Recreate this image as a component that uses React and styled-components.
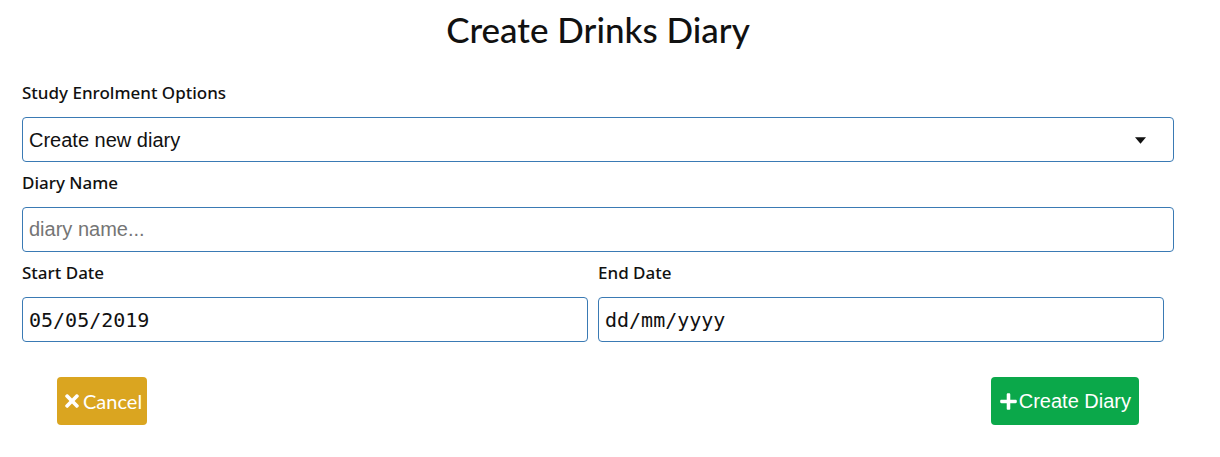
import React from "react";
import styled, { createGlobalStyle } from "styled-components";
import { FaTimes, FaPlus } from "react-icons/fa";

const GlobalStyle = createGlobalStyle`
  body {
    margin: 0;
    background: #ffffff;
    font-family: "Lato", "Noto Sans", sans-serif;
    color: #111;
  }
`;

export default function App() {
  return (
    <>
      <GlobalStyle />
      <Page>
        <Title>Create Drinks Diary</Title>
        <Form>
          <Field>
            <Label>Study Enrolment Options</Label>
            <SelectWrap>
              <Select defaultValue="new">
                <option value="new">Create new diary</option>
              </Select>
              <Caret viewBox="0 0 10 6">
                <path d="M0 0h10L5 6z" fill="#111" />
              </Caret>
            </SelectWrap>
          </Field>
          <Field>
            <Label>Diary Name</Label>
            <TextInput placeholder="diary name..." />
          </Field>
          <DateRow>
            <Field>
              <Label>Start Date</Label>
              <DateInput defaultValue="05/05/2019" />
            </Field>
            <Field>
              <Label>End Date</Label>
              <DateInput placeholder="dd/mm/yyyy" />
            </Field>
          </DateRow>
          <Actions>
            <Button $bg="#daa520" $font='"Lato", sans-serif' $pad="5px">
              <FaTimes size={20} />
              Cancel
            </Button>
            <Button $bg="#0ba84a" $font='"Liberation Sans", Arial, sans-serif' $pad="8px">
              <FaPlus size={19} />
              Create Diary
            </Button>
          </Actions>
        </Form>
      </Page>
    </>
  );
}

const Page = styled.div`
  padding: 6px 46px 0 22px;
`;

const Title = styled.h2`
  margin: 0 0 29px;
  text-align: center;
  font-size: 35px;
  font-weight: 500;
  line-height: 46px;
  width: 1152px;
`;

const Form = styled.form`
  width: 1152px;
  display: flex;
  flex-direction: column;
  gap: 9px;
`;

const Field = styled.div`
  display: flex;
  flex-direction: column;
`;

const Label = styled.label`
  font-family: "Noto Sans", sans-serif;
  font-size: 17px;
  font-weight: 500;
  line-height: 24px;
  margin-bottom: 12px;
`;

const SelectWrap = styled.div`
  position: relative;
`;

const Select = styled.select`
  appearance: none;
  width: 100%;
  height: 45px;
  box-sizing: border-box;
  border: 1px solid #3a7ab4;
  border-radius: 4px;
  padding: 0 6px;
  background: #fff;
  font-family: "Liberation Sans", Arial, sans-serif;
  font-size: 20px;
  color: #111;
`;

const Caret = styled.svg`
  position: absolute;
  right: 28px;
  top: 20px;
  width: 11px;
  height: 7px;
  pointer-events: none;
`;

const TextInput = styled.input`
  height: 45px;
  box-sizing: border-box;
  border: 1px solid #3a7ab4;
  border-radius: 4px;
  padding: 0 6px;
  font-family: "Liberation Sans", Arial, sans-serif;
  font-size: 20px;
  color: #111;
  &::placeholder {
    color: #757575;
  }
`;

const DateRow = styled.div`
  display: grid;
  grid-template-columns: 566px 566px;
  gap: 10px;
`;

const DateInput = styled(TextInput)`
  font-family: "DejaVu Sans Mono", monospace;
  font-size: 20px;
  &::placeholder {
    color: #111;
  }
`;

const Actions = styled.div`
  display: flex;
  justify-content: space-between;
  padding: 26px 35px 0;
`;

const Button = styled.button`
  display: inline-flex;
  align-items: center;
  gap: 1px;
  height: 48px;
  padding: 0 ${(p) => p.$pad};
  border: none;
  border-radius: 4px;
  background: ${(p) => p.$bg};
  color: #fff;
  font-family: ${(p) => p.$font};
  font-size: 20px;
  cursor: pointer;
`;
